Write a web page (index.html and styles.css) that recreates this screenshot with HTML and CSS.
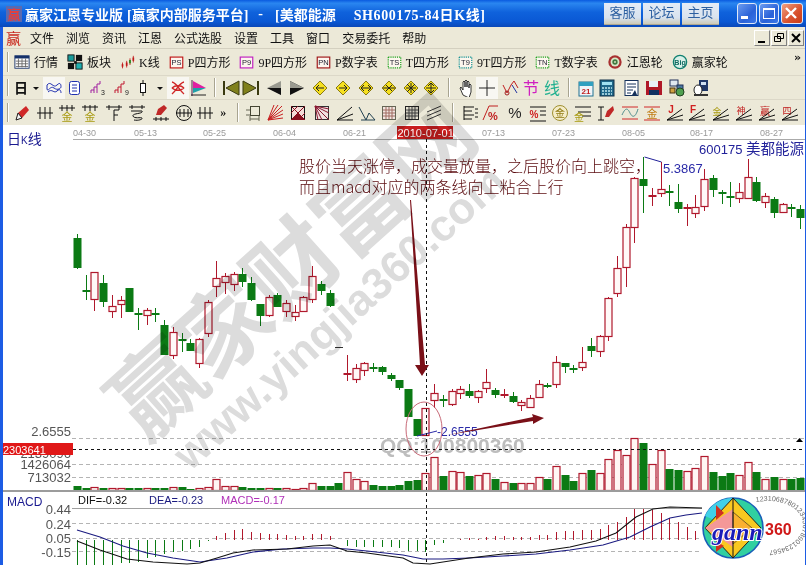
FILE: index.html
```html
<!DOCTYPE html>
<html lang="zh-CN">
<head>
    <meta charset="UTF-8">
    <title>赢家江恩专业版</title>
    <link rel="stylesheet" href="styles.css">
</head>
<body>

<div class="app">
    <div class="titlebar">
        <svg class="title-logo" width="16" height="16" viewBox="0 0 16 16"><rect width="16" height="16" fill="#5a6ab0"/><text x="8" y="13" font-size="13" text-anchor="middle" fill="#e04040">赢</text></svg>
        <span class="t1">赢家江恩专业版</span>
        <span class="t2">[赢家内部服务平台]</span>
        <span class="t3">-</span>
        <span class="t4">[美都能源</span>
        <span class="t5">SH600175-84日K线]</span>
        <div class="links">
            <a class="link">客服</a>
            <a class="link">论坛</a>
            <a class="link">主页</a>
        </div>
        <div class="winbtns">
            <div class="winbtn"><svg width="20" height="20" viewBox="0 0 20 20"><rect x="4" y="13" width="7" height="3" fill="#fff"/></svg></div>
            <div class="winbtn"><svg width="20" height="20" viewBox="0 0 20 20"><rect x="4.5" y="5.5" width="11" height="10" fill="none" stroke="#fff"/><rect x="4" y="5" width="12" height="2" fill="#fff"/></svg></div>
            <div class="winbtn close"><svg width="20" height="20" viewBox="0 0 20 20"><path d="M5 5l10 10M15 5L5 15" stroke="#fff" stroke-width="2.4"/></svg></div>
        </div>
    </div>

    <div class="menubar">
        <span class="menu-logo">赢</span>
        <span>文件</span><span>浏览</span><span>资讯</span><span>江恩</span><span>公式选股</span><span>设置</span><span>工具</span><span>窗口</span><span>交易委托</span><span>帮助</span>
        <div class="mdi">
            <div class="mdibtn"><svg width="12" height="12" viewBox="0 0 12 12"><rect x="2" y="9" width="7" height="2" fill="#000"/></svg></div>
            <div class="mdibtn"><svg width="12" height="12" viewBox="0 0 12 12"><path d="M4.5 1.5h6v5h-6zM1.5 4.5h6v5h-6z" fill="#ece9d8" stroke="#000"/></svg></div>
            <div class="mdibtn"><svg width="12" height="12" viewBox="0 0 12 12"><path d="M2 2l8 8M10 2l-8 8" stroke="#000" stroke-width="2"/></svg></div>
        </div>
    </div>

    <div class="toolbar row-text" id="tb1"></div>
    <div class="toolbar row-two" id="tb2"></div>
    <div class="toolbar row-three" id="tb3"></div>

    <div class="chart" id="chart"></div>

    <svg class="watermark" width="806" height="565" viewBox="0 0 806 565">
        <text class="wm-big" transform="translate(145 444) rotate(-42)">赢家财富网</text>
        <text class="wm-url" transform="translate(190 472) rotate(-42)">www.yingjia360.com</text>
    </svg>
</div>

<script src="script.js"></script>
</body>
</html>
```

FILE: styles.css
```css
body {
    margin: 0;
    overflow: hidden;
    background: #ece9d8;
    font-family: "Liberation Serif", "Noto Sans CJK SC", serif;
}

.app {
    position: relative;
    width: 806px;
    height: 565px;
    overflow: hidden;
}

/* blue window edges */
.app::before,
.app::after {
    content: '';
    position: absolute;
    left: 0;
    top: 27px;
    bottom: 0;
    width: 3px;
    background: #1c5ce4;
    z-index: 3;
}

.app::after {
    left: auto;
    right: 0;
    width: 1px;
}

.titlebar {
    height: 27px;
    display: flex;
    align-items: center;
    color: #fff;
    font-size: 14px;
    font-weight: bold;
    white-space: nowrap;
    background: linear-gradient(180deg, #0a5be0 0%, #2a86f0 12%, #0f62dc 45%, #0a58d4 80%, #0a48b8 100%);
}

.title-logo { margin-left: 6px; flex: none; }
.t1 { margin-left: 3px; }
.t2 { margin-left: 4px; }
.t3 { margin-left: 10px; }
.t4 { margin-left: 12px; }
.t5 { margin-left: 18px; letter-spacing: .6px; }

.links {
    display: flex;
    gap: 2px;
    position: absolute;
    left: 604px;
    top: 3px;
}

.link {
    width: 37px;
    height: 22px;
    line-height: 20px;
    text-align: center;
    font-size: 13px;
    font-weight: normal;
    color: #2c5fa0;
    background: linear-gradient(180deg, #e4ecf6, #d8e2ee 70%, #cfcbb8);
    border-bottom: 1px solid #b0a890;
    box-sizing: border-box;
}

.winbtns {
    display: flex;
    gap: 2px;
    position: absolute;
    left: 737px;
    top: 3px;
}

.winbtn {
    width: 20px;
    height: 21px;
    border: 1px solid #dfe8f8;
    border-radius: 3px;
    box-sizing: border-box;
    background: linear-gradient(135deg, #6c9cf0, #2a62d8 60%, #3c78e8);
}

.winbtn svg { display: block; margin: -1px; }

.winbtn.close {
    width: 22px;
    background: linear-gradient(135deg, #f0a080, #d8502c 60%, #c83c18);
}

.menubar {
    height: 22px;
    display: flex;
    align-items: center;
    gap: 12px;
    padding-left: 6px;
    font-size: 12px;
    color: #111;
    box-sizing: border-box;
    border-bottom: 1px solid #d4d0c0;
    position: relative;
}

.menu-logo {
    color: #c8281e;
    font-size: 15px;
    margin-right: -3px;
    width: 15px;
}

.mdi {
    position: absolute;
    left: 754px;
    top: 3px;
    display: flex;
    gap: 1px;
}

.mdibtn {
    width: 16px;
    height: 16px;
    box-sizing: border-box;
    padding: 1px;
    border: 1px solid;
    border-color: #fff #808080 #808080 #fff;
}

.mdibtn svg { display: block; }

.toolbar {
    display: flex;
    align-items: center;
    box-sizing: border-box;
    border-bottom: 1px solid #dcd8c8;
    font-size: 12px;
    color: #111;
    white-space: nowrap;
    position: relative;
}

.row-text { height: 27px; padding-left: 14px; }
.row-two { height: 24px; }
.row-three { height: 25px; border-bottom: 0; }

/* grab handle at the start of each toolbar */
.toolbar::before {
    content: '';
    position: absolute;
    left: 7px;
    top: 3px;
    bottom: 3px;
    width: 1px;
    background: #a8a490;
    border-right: 1px solid #fff;
}

.tool {
    display: flex;
    align-items: center;
    gap: 4px;
    margin-right: 9px;
}

.tool svg, .btn svg { display: block; flex: none; }

.more {
    position: absolute;
    left: 794px;
    top: 2px;
    font-size: 11px;
    font-weight: bold;
    font-family: "DejaVu Sans", sans-serif;
}

.btn {
    height: 100%;
    flex: none;
    display: flex;
    align-items: center;
    justify-content: center;
}

.btn.sel svg {
    background: #f8f7f2;
    outline: 2px solid #f8f7f2;
}

.sep {
    width: 1px;
    height: 19px;
    background: #a8a490;
    border-right: 1px solid #fff;
}

.chart { height: 440px; background: #fff; }
.chart svg { display: block; }

.chart text { font-family: "Liberation Sans", "Noto Sans CJK SC", sans-serif; }

.date { font-size: 9px; fill: #9a9a9a; }
.date-now { font-size: 11px; fill: #fff; }
.axis { font-size: 13px; fill: #555; text-anchor: end; }
.note { font-size: 16px; font-weight: 300; fill: #5a0a0e; }
.chart text.note { font-family: "Noto Sans CJK SC", sans-serif; }
.stock { font-size: 13px; fill: #22229a; }
.price { fill: #2a2aa8; }
.qq { font-size: 21px; font-weight: bold; fill: #bdbdbd; }
.macd-val { font-size: 11px; }

.watermark {
    position: absolute;
    left: 0;
    top: 0;
    pointer-events: none;
    mix-blend-mode: multiply;
    z-index: 2;
}

.wm-big {
    font-family: "Noto Sans CJK SC", sans-serif;
    font-size: 91px;
    font-weight: 700;
    fill: #dcdcdc;
}

.wm-url {
    font-family: "Liberation Sans", sans-serif;
    font-size: 44px;
    font-weight: bold;
    fill: #dcdcdc;
}
```

FILE: script.js
```js
// small text helper for icons
function t(s, x, y, size, fill, extra) {
    return `<text x="${x}" y="${y}" font-size="${size}" fill="${fill}" text-anchor="middle" font-family="Liberation Sans, Noto Sans CJK SC, sans-serif" ${extra || ''}>${s}</text>`;
}
function boxIcon(label, color, dash) {
    return `<rect x="1.5" y="2.5" width="15" height="13" fill="#fdf6ee" stroke="${color}" stroke-width="1.4" ${dash ? 'stroke-dasharray="1.4 1.2"' : ''}/>` + t(label, 9, 12.5, 9, '#223');
}
function diamond(inner) {
    return `<path d="M9 2l7 7-7 7-7-7z" fill="#f6e020" stroke="#8a7a10"/><path d="${inner}" stroke="#222" fill="none"/>`;
}
const stairs = c => `<path d="M2 14v-3h3v-3h3v-3h3v-3" fill="none" stroke="${c}"/><path d="M5 14v-3M8 14v-6" stroke="${c}"/>`;
const angleLines = '<path d="M1 16L16 5M1 16L17 11M1 16h16" stroke="#111"/>';

const icons = {
    table: '<rect x="1" y="2" width="16" height="14" fill="#fff" stroke="#14306a"/><rect x="1" y="2" width="16" height="3" fill="#14306a"/><path d="M2 8h14M2 11h14M2 14h14M5 5v10M9 5v10M13 5v10" stroke="#666"/>',
    blocks: '<rect x="1" y="1" width="7" height="7" fill="#189a9a" stroke="#111"/><rect x="10" y="1" width="7" height="7" fill="#111"/><rect x="1" y="10" width="7" height="7" fill="#111"/><rect x="10" y="10" width="7" height="7" fill="#20b0b0" stroke="#111"/><rect x="8" y="8" width="3" height="3" fill="#111"/>',
    kline: '<path d="M3 9v7M8 7v8M12 4v8M16 1v8" stroke="#c01818"/><rect x="2" y="11" width="2" height="3" fill="#c01818"/><rect x="7" y="9" width="2" height="4" fill="#c01818"/><rect x="11" y="6" width="2" height="4" fill="#188a18"/><rect x="15" y="3" width="2" height="4" fill="#c01818"/>',
    ps: boxIcon('PS', '#c01818'),
    p9: boxIcon('P9', '#c020c0'),
    pn: boxIcon('PN', '#a01818'),
    ts: boxIcon('TS', '#18a018', true),
    t9: boxIcon('T9', '#109090', true),
    tn: boxIcon('TN', '#18a018', true),
    wheel: '<circle cx="9" cy="9" r="7.5" fill="#a83030"/><circle cx="9" cy="9" r="5" fill="#d8e8c8"/><circle cx="9" cy="9" r="3" fill="#407a40"/><circle cx="9" cy="9" r="1" fill="#e8e8c8"/>',
    big: '<circle cx="9" cy="9" r="7.5" fill="#d8f0e8" stroke="#108070" stroke-width="1.4"/>' + t('Big', 9, 12, 8, '#106a60', 'font-weight="bold"'),
    day: t('日', 9, 14, 14, '#111', 'font-weight="bold"'),
    down: '<path d="M6 8h6l-3 3z" fill="#111"/>',
    wave: '<path d="M2 6c4-5 6 4 10 0s4 1 4 2-3 4-7 1-6 5-7 1z M3 13c4-4 6 2 9-1s4 0 4 2" fill="none" stroke="#2030b0"/>',
    doc: '<rect x="3.5" y="2.5" width="10" height="13" rx="2" fill="#fff" stroke="#2030b0"/><path d="M6 6h5M6 9h5M6 12h5" stroke="#2030b0"/>',
    n3: stairs('#a020a0') + t('3', 14, 16, 7, '#222'),
    n9: stairs('#c01830') + t('9', 14, 16, 7, '#222'),
    candle: '<path d="M9 1v16" stroke="#111"/><rect x="6.5" y="4.5" width="5" height="9" fill="#fff" stroke="#111"/>',
    xred: '<path d="M3 3c5 1 7 8 12 12M15 3c-5 1-7 8-12 12M3 9c3-3 9-3 12 0M3 9c3 3 9 3 12 0" fill="none" stroke="#d02828" stroke-width="1.4"/>',
    flag: '<path d="M3 1v16" stroke="#502050"/><path d="M4 2l13 7H4z" fill="#e020a0"/><path d="M4 9h13l-13 5z" fill="#20a0a8"/><path d="M2 16h15" stroke="#222"/>',
    first: '<rect x="1" y="2" width="2" height="14" fill="#3a3a10"/><path d="M17 2v14L4 9z" fill="#80801c" stroke="#3a3a10"/>',
    last: '<rect x="15" y="2" width="2" height="14" fill="#3a3a10"/><path d="M1 2v14l13-7z" fill="#80801c" stroke="#3a3a10"/>',
    prev: '<path d="M16 2v14L2 9z" fill="#9a9a90"/><path d="M16 16L2 9h14z" fill="#111"/>',
    next: '<path d="M2 2v14l14-7z" fill="#111"/><path d="M2 2l14 7H2z" fill="#9a9a90"/>',
    d1: diamond('M5 9h8M8 6L5 9l3 3'),
    d2: diamond('M5 9h8M10 6l3 3-3 3'),
    d3: diamond('M4 9h10M7 6L4 9l3 3M11 6l3 3-3 3'),
    d4: diamond('M3 9h12M6 6l3 3-3 3M12 6L9 9l3 3'),
    d5: diamond('M5 5l8 8M13 5l-8 8M9 4v10M4 9h10'),
    d6: diamond('M9 4v10M4 9h10M6 7l3-3 3 3M6 11l3 3 3-3'),
    hand: '<path d="M6 16L3 9l1-1 2 3V3l1-1 1 1v5-6l1-1 1 1v6-5l1-1 1 1v6-3l1-1 1 1v7l-2 6z" fill="#fff" stroke="#222" stroke-width=".9"/>',
    plus: '<path d="M9 1v16M1 9h16" stroke="#222"/>',
    zig: '<path d="M2 6l4 8 4-8 3-4 4 7" fill="none" stroke="#c02020"/><circle cx="6" cy="14" r="2" fill="none" stroke="#a02020"/><path d="M11 6l5 8" stroke="#2030a0"/>',
    jie: t('节', 9, 15, 16, '#d020c0'),
    xian: t('线', 9, 15, 16, '#20b090'),
    cal: '<rect x="2" y="3" width="14" height="14" fill="#f0f4f8" stroke="#207090"/><rect x="2" y="3" width="14" height="4" fill="#30a0c0"/>' + t('21', 9, 15, 8, '#c02020', 'font-weight="bold"'),
    calc: '<rect x="2" y="1" width="14" height="16" fill="#20688a" stroke="#103048"/><rect x="4" y="3" width="10" height="3" fill="#a0e0f0"/><path d="M4 9h10M4 12h10M4 15h10" stroke="#c0e8f0" stroke-dasharray="2 1" stroke-width="1.5"/>',
    notes: '<rect x="3" y="1.5" width="13" height="15" fill="#fff" stroke="#14305a"/><path d="M5 5h9M5 8h9M5 11h6M5 14h4" stroke="#14305a"/><path d="M13 11l2 5h-5z" fill="#14305a"/>',
    save: '<rect x="1" y="2" width="16" height="14" fill="#b01828"/><rect x="4" y="2" width="9" height="6" fill="#e8f0f8"/><rect x="4" y="11" width="10" height="5" fill="#103060"/>',
    net: '<rect x="2" y="1" width="8" height="6" fill="#e0e8f0" stroke="#203058"/><rect x="9" y="6" width="6" height="5" fill="#4a78a0" stroke="#203058"/><circle cx="12" cy="13" r="4" fill="#50a050" stroke="#204020"/><rect x="2" y="9" width="5" height="5" fill="#d0a040" stroke="#403010"/>',
    disk: '<rect x="7" y="1" width="9" height="11" fill="#203868"/><rect x="9" y="3" width="5" height="3" fill="#d0e0f0"/><ellipse cx="6" cy="11" rx="4" ry="5" fill="#fff" stroke="#222"/><path d="M2 15h14v2H2z" fill="#333"/>',
    pen: '<path d="M3 16l2-7 8-7 3 4-7 8z" fill="#d02828"/><path d="M3 16l2-7 4 5z" fill="#f4f4f4" stroke="#222"/>',
    hash: '<path d="M1 9h16M4 3v12M9 3v12M14 3v12" stroke="#111"/>',
    jin1: '<path d="M1 4h16M4 1v6M9 1v6M14 1v6" stroke="#111"/>' + t('金', 9, 17, 11, '#a89a10'),
    jin2: '<path d="M1 3h16M4 1v6M9 1v6M14 1v6" stroke="#111"/>' + t('金', 9, 17, 11, '#a89a10'),
    ffork: '<path d="M1 3h16M4 1v5M14 1v5M9 6v11M9 6h5M9 11h4" stroke="#111" fill="none"/>',
    spring: '<path d="M1 3h16M4 1v4M14 1v4M3 7h11c2 3-10 2-9 5s8 1 9 2-3 3-8 2" stroke="#111" fill="none"/>',
    penb: '<path d="M4 11l2-6 6-4 3 3-6 7z" fill="#c02828"/><path d="M1 15h16M4 13v4M9 13v4M14 13v4" stroke="#111"/>',
    circ: '<circle cx="9" cy="9" r="7.5" fill="none" stroke="#111"/><path d="M1 9h16M5 5v8M9 5v8M13 5v8" stroke="#111"/>',
    box: '<rect x="5.5" y="2.5" width="9" height="9" fill="none" stroke="#443"/><path d="M1 6h4M1 11h4M5 12v5M14 12v5M5 15h9" stroke="#665"/>',
    fan: '<path d="M2 16L16 2M2 16L17 6M2 16L17 10M2 16L17 14M2 16L8 1M2 16L12 1" stroke="#c82020"/>',
    gbox: '<rect x="2.5" y="2.5" width="13" height="13" fill="#f4dcd8" stroke="#111"/><path d="M2 16L16 2M2 2l14 14M9 2L2 9M16 9l-7 7" stroke="#8a1020"/><path d="M2 16l7-7 7 7z" fill="#8a1020"/>',
    gfan: '<rect x="2.5" y="2.5" width="13" height="13" fill="#f0e0e0" stroke="#333"/><path d="M2 2l14 14M2 2l14 7M2 2l7 14M2 2l14 3M2 2l3 14" stroke="#8a1830"/>',
    angle: '<path d="M1 16L16 3M1 16L17 10M1 16h16" stroke="#111"/>',
    vee: '<path d="M1 3l7 13 3-7 6 7M3 16h14" stroke="#204050" fill="none"/>',
    grid: '<rect x="2.5" y="2.5" width="13" height="13" fill="#f0e6e0" stroke="#665"/><path d="M6 3v12M9 3v12M12 3v12M3 6h12M3 9h12M3 12h12" stroke="#a06a60"/>',
    grid2: '<rect x="2.5" y="2.5" width="13" height="13" fill="#e8e4d4" stroke="#222"/><path d="M6 3v12M9 3v12M12 3v12M3 6h12M3 9h12M3 12h12" stroke="#444"/>',
    para: '<path d="M2 8L16 2M2 12L16 6M2 16L16 10" stroke="#333"/>',
    bars: '<path d="M3 2v14M3 3h10M3 7h8M3 11h10M3 15h8" stroke="#111" fill="none"/><path d="M14 5h3M14 9h3M14 13h3" stroke="#111"/>',
    pctline: '<path d="M1 16L7 2h9" stroke="#c02020" fill="none"/>' + t('%', 11, 16, 11, '#c02020', 'font-weight="bold"'),
    pct: t('%', 9, 14, 15, '#222'),
    pctl: '<path d="M1 3h16M1 17h16M11 7h6M11 11h6" stroke="#111"/>' + t('%', 5, 14, 10, '#d02020', 'font-weight="bold"'),
    jinc: '<circle cx="9" cy="9" r="7.5" fill="#f4ecc8" stroke="#a09030"/>' + t('金', 9, 13, 10, '#907a10'),
    jinl: '<path d="M1 3h16M4 8h13M8 12h9" stroke="#111"/>' + t('金', 5, 17, 10, '#a89a10'),
    ipen: '<path d="M1 3h6M4 3v13M1 16h6" stroke="#111"/><path d="M8 13l2-6 6-5 1 4-5 7z" fill="#c02828"/>',
    wavel: '<path d="M1 3h16M1 15h16" stroke="#d02828"/><path d="M1 11c4-9 6-6 8-2s5 6 8-4" fill="none" stroke="#4a8a8a"/>',
    jinr: '<path d="M1 3h16M1 16h16" stroke="#d02828"/>' + t('金', 9, 14, 11, '#c07a10'),
    tagj: t('J', 5, 9, 10, '#d02020', 'font-weight="bold"') + angleLines,
    tagf: t('F', 5, 9, 10, '#d02020', 'font-weight="bold"') + angleLines,
    tagjin: t('金', 5, 11, 9, '#a89a10') + angleLines,
    tagshen: t('神', 6, 10, 9, '#c02020') + angleLines,
    tagying: t('赢', 7, 11, 10, '#c02020') + angleLines,
    tagsi: t('四', 6, 10, 9, '#c02020') + angleLines
};

function svgIcon(key, size) {
    return `<svg width="${size}" height="${size}" viewBox="0 0 18 18">${icons[key]}</svg>`;
}

// first toolbar: icon + label
const textTools = [
    ['table', '行情', 16], ['blocks', '板块', 16], ['kline', 'K线', 15], ['ps', 'P四方形', 15], ['p9', '9P四方形', 15],
    ['pn', 'P数字表', 15], ['ts', 'T四方形', 15], ['t9', '9T四方形', 15], ['tn', 'T数字表', 15], ['wheel', '江恩轮', 16], ['big', '赢家轮', 16]
];
document.getElementById('tb1').innerHTML = textTools
    .map(([k, label, s]) => `<div class="tool">${svgIcon(k, s)}<span>${label}</span></div>`).join('') + '<span class="more">»</span>';

// other toolbars: [icon, centre x]; widths come from the distance between neighbours
const row2 = [['day', 21], ['down', 35], ['wave', 53, 1], ['doc', 75], ['n3', 97], ['n9', 122], ['candle', 145], ['down', 158], ['xred', 177, 1], ['flag', 199],
    ['|', 217], ['first', 228], ['last', 250], ['prev', 274], ['next', 297], ['d1', 319], ['d2', 343], ['d3', 366], ['d4', 390], ['d5', 410], ['d6', 433],
    ['|', 449], ['hand', 463], ['plus', 487, 1], ['zig', 510], ['jie', 531], ['xian', 553], ['|', 570], ['cal', 583], ['calc', 607], ['notes', 632], ['save', 653], ['net', 678], ['disk', 700]];
const row3 = [['pen', 22], ['hash', 45], ['jin1', 66], ['jin2', 90], ['ffork', 114], ['spring', 137], ['penb', 161], ['circ', 184], ['hash', 206], ['»', 225],
    ['|', 237], ['box', 252], ['fan', 275], ['gbox', 298], ['gfan', 322], ['angle', 345], ['vee', 367], ['grid', 389], ['grid2', 412], ['para', 435],
    ['|', 455], ['bars', 466], ['pctline', 491], ['pct', 515], ['pctl', 538], ['jinc', 560], ['jinl', 583], ['ipen', 606], ['wavel', 630], ['jinr', 652],
    ['tagj', 675], ['tagf', 696], ['tagjin', 721], ['tagshen', 745], ['tagying', 766], ['tagsi', 790]];

function buildRow(id, items) {
    const row = document.getElementById(id);
    let left = 2 * items[0][1] - (items[0][1] + items[1][1]) / 2;
    row.style.paddingLeft = left + 'px';
    let html = '';
    items.forEach((it, i) => {
        const next = items[i + 1];
        const right = next ? (it[1] + next[1]) / 2 : it[1] + 12;
        let inner;
        if (it[0] === '|') inner = '<div class="sep"></div>';
        else if (it[0] === '»') inner = '<b>»</b>';
        else inner = svgIcon(it[0], 18);
        html += `<div class="btn${it[2] ? ' sel' : ''}" style="width:${right - left}px">${inner}</div>`;
        left = right;
    });
    row.innerHTML = html;
}
buildRow('tb2', row2);
buildRow('tb3', row3);

// candles: [type, wick top, body top, body bottom, wick bottom]
const K = [
    ['g',234,238,268,269],['g',275,290,291,300],['r',272,272,299,311],['g',275,283,302,307],['r',295,306,311,318],['r',296,300,304,318],['g',288,288,312,312],['g',308,313,314,330],['r',308,310,315,325],['g',308,313,314,322],
    ['g',320,325,355,355],['r',327,332,355,359],['g',333,339,340,352],['g',339,343,351,351],['r',338,339,363,368],['r',300,302,333,337],['r',261,278,286,297],['r',273,276,282,294],['r',272,274,284,291],['g',268,274,282,287],
    ['g',277,283,300,301],['g',304,304,316,326],['r',295,297,315,317],['g',293,295,307,307],['r',300,303,311,317],['r',305,312,316,321],['r',296,297,311,312],['r',266,276,299,303],['g',281,284,291,295],['g',290,293,306,307],
    ['k',347,347,347,347],['r',355,373,374,381],['r',364,368,379,383],['r',362,363,370,376],['g',363,367,368,372],['g',366,367,372,375],['g',373,375,379,381],['g',380,380,388,390],['g',389,389,417,417],['g',419,419,436,436],
    ['r',408,408,435,436],['r',384,393,400,408],['g',395,399,400,407],['r',389,391,404,406],['r',386,389,393,399],['g',384,391,396,398],['r',390,391,397,403],['r',369,382,388,393],['g',388,390,395,398],['r',389,394,395,398],
    ['g',392,396,402,403],['r',400,402,405,411],['r',395,398,407,408],['r',380,384,397,398],['g',383,385,386,388],['r',356,362,384,388],['g',363,363,367,373],['g',365,368,369,373],['r',347,362,367,371],['g',338,346,351,357],
    ['r',335,336,351,357],['r',297,298,336,341],['r',256,268,293,297],['r',224,227,267,287],['r',177,178,227,243],['g',157,179,186,213],['r',188,195,196,206],['r',162,189,193,197],['g',185,191,192,206],['g',184,202,209,213],
    ['r',204,207,208,226],['r',195,207,213,218],['r',169,179,206,211],['g',175,178,190,197],['g',190,192,193,204],['g',182,196,197,207],['r',183,192,198,203],['r',159,177,198,198],['g',177,182,201,202],['r',193,196,202,208],
    ['g',197,199,213,218],['r',203,204,212,213],['g',204,207,209,217],['g',205,209,218,229]
];

// volume bars: top y of each bar, bottom is always 490
const volTop = [486,488,487,488,488,488,488,488,488,488,488,487,487,489,488,487,479,486,486,487,488,488,488,488,488,489,488,483,486,486,483,472,479,481,485,486,486,485,
    481,480,473,457,476,471,472,476,475,473,479,482,483,483,483,477,479,466,475,481,473,470,473,459,450,455,438,443,464,450,469,470,471,468,456,472,476,473,475,462,472,479,477,479,479,478];

// macd bars, one y per candle: below 540 is green, above is red
const macd = [565,565,565,565,565,563,563,562,558,557,554,552,551,549,547,541,536,533,530,529,532,533,534,534,535,536,536,534,534,536,540,546,547,547,547,547,547,548,
    551,551,552,545,543,540,539,538,539,537,536,536,537,537,537,535,535,532,531,531,530,530,529,525,522,517,509,509,510,513,518,522,527,531];

const xOf = i => Math.round(77 + 8.71 * i);
const RED = '#b0182c', GREEN = '#0b7a14';
let s = '';

// scale row
s += '<path d="M73 139.5H806" stroke="#aaa"/>';
[['04-30',73],['05-13',134],['05-25',203],['06-04',273],['06-21',343],['07-13',482],['07-23',552],['08-05',622],['08-17',690],['08-27',760]]
    .forEach(([d, x]) => { s += `<text class="date" x="${x}" y="136">${d}</text>`; });
s += '<rect x="397" y="126" width="56" height="13" fill="#c81e1e"/><text class="date-now" x="397.5" y="137">2010-07-01</text>';
s += '<text x="7" y="144" font-size="14" fill="#1a1a90">日<tspan font-size="10">K</tspan>线</text>';

// grid
[438, 464, 477].forEach(y => { s += `<path d="M72 ${y}.5H806" stroke="#b4b4b4" stroke-dasharray="4 3"/>`; });
s += '<text class="axis" x="71" y="436">2.6555</text><text class="axis" x="71" y="458">2139096</text>';
s += '<text class="axis" x="71" y="469">1426064</text><text class="axis" x="71" y="482">713032</text>';
s += '<rect x="3" y="443" width="70" height="12" fill="#e01818"/><text x="3" y="453.5" font-size="11" fill="#fff">2303641</text>';
s += '<path d="M796 442l3.5-4 3.5 4z" fill="#000"/>';

// candles
K.forEach((k, i) => {
    const x = xOf(i), col = k[0] === 'r' ? RED : k[0] === 'g' ? GREEN : '#333';
    const thin = k[3] - k[2] <= 1;
    s += `<path d="M${x + .5} ${k[1]}V${k[4]}" stroke="${col}"/>`;
    if (k[0] === 'k') s += `<path d="M${x - 3} ${k[1]}.5h8" stroke="${col}"/>`;
    else if (thin) s += `<rect x="${x - 3.5}" y="${k[2]}" width="8" height="2" fill="${col}"/>`;
    else if (k[0] === 'g') s += `<rect x="${x - 3.5}" y="${k[2]}" width="8" height="${k[3] - k[2]}" fill="${col}"/>`;
    else s += `<rect x="${x - 3}" y="${k[2]}.5" width="7" height="${k[3] - k[2]}" fill="#fff9f8" stroke="${col}" stroke-width="1.2"/>`;
});

// volume
K.forEach((k, i) => {
    const x = xOf(i), top = volTop[i];
    if (k[0] === 'r') s += `<rect x="${x - 3}" y="${top}.5" width="7" height="${490 - top}" fill="#fff6f4" stroke="${RED}" stroke-width="1.2"/>`;
    else s += `<rect x="${x - 3.5}" y="${top}" width="8" height="${490 - top}" fill="${GREEN}"/>`;
});
s += '<rect x="0" y="490" width="806" height="2" fill="#9c9c9c"/>';

// macd panel
s += '<path d="M72 508.5H806" stroke="#a0a0a0"/>';
[523, 538, 551].forEach(y => { s += `<path d="M72 ${y}.5H806" stroke="#b4b4b4" stroke-dasharray="4 3"/>`; });
s += '<text x="7" y="506" font-size="12" fill="#1a1a90">MACD</text>';
s += '<text class="macd-val" x="78" y="504" fill="#111">DIF=-0.32</text><text class="macd-val" x="149" y="504" fill="#1a1a80">DEA=-0.23</text><text class="macd-val" x="221" y="504" fill="#b030b8">MACD=-0.17</text>';
[['0.44', 514], ['0.24', 529], ['0.05', 543], ['-0.15', 557]].forEach(([v, y]) => { s += `<text class="axis" x="71" y="${y}">${v}</text>`; });
macd.forEach((y, i) => {
    const x = xOf(i) + .5;
    s += `<path d="M${x} 540V${y}" stroke="${y > 540 ? GREEN : RED}"/>`;
});
s += '<polyline fill="none" stroke="#1a1a80" stroke-width="1.1" points="77,530 100,537 123,546 147,553 173,558 200,562 227,558 253,552 283,549 313,548 330,548 347,549 367,551 403,555 423,559 443,559 469,558 503,556 536,554 570,550 603,545 630,537 650,527 670,518 686,515 702,513"/>';
s += '<polyline fill="none" stroke="#111" stroke-width="1.1" points="77,541 100,550 127,559 153,562 187,564 200,563 217,558 233,553 253,550 287,549 313,546 330,545 347,551 367,553 403,558 413,563 430,564 469,558 503,554 536,552 570,547 596,541 616,533 636,517 653,509 670,507 702,508"/>';

// annotation
s += '<text class="note" x="299" y="172">股价当天涨停，成交量放量，之后股价向上跳空，</text>';
s += '<text class="note" x="299" y="193">而且macd对应的两条线向上粘合上行</text>';
s += '<text class="stock" x="699" y="154">600175 <tspan font-size="14.5">美都能源</tspan></text>';
s += '<path d="M644.5 157L661.5 162" stroke="#22229a"/>';
s += '<text class="stock price" x="663" y="173">5.3867</text>';
s += '<path d="M417 436L437 431" stroke="#2a2aa8"/><text class="price" x="437" y="436" font-size="12">-2.6555</text>';

s += '<text class="qq" x="380" y="453">QQ:100800360</text>';
s += '<path d="M73 449.5H806" stroke="#111" stroke-dasharray="3 3"/>';
s += '<path d="M426.5 139V565" stroke="#111" stroke-dasharray="3 3"/>';
s += '<ellipse cx="424" cy="429" rx="18" ry="27" fill="none" stroke="#c86a78"/>';
s += '<path d="M410 200L411 200L425 365L429 365L422 376L415 365L420 365Z" fill="#7a1018"/>';
s += '<path d="M448 435L533 417L532 414L544 418L533 424L533 421Z" fill="#7a1018"/>';

// gann360 logo
s += `<g>
<rect x="702" y="494" width="103" height="71" fill="#fff"/>
<circle cx="733" cy="528" r="30" fill="#30d0a0" stroke="#1a60b8" stroke-width="1.6"/>
<path d="M705 516A30 30 0 0 1 733 498L733 528Z" fill="#40d0e8"/>
<path d="M733 498L761 528L733 558L705 528Z" fill="#f8c820" stroke="#222"/>
<path d="M705 528L733 509V547Z" fill="#f49898"/>
<path d="M733 512L752 528L733 544Z" fill="#fab030" stroke="#222" stroke-width=".6"/>
<path d="M716 505L724 513L716 520Z" fill="#d03020"/>
<path d="M716 552L724 546L716 541Z" fill="#d03020"/>
<path d="M733 498V558" stroke="#111"/>
<text x="712" y="540" font-size="24" font-weight="bold" font-style="italic" fill="#1a1ab8" stroke="#fff" stroke-width="2" paint-order="stroke" style="font-family:'Liberation Serif',serif">gann</text>
<text x="765" y="535" font-size="16" font-weight="bold" fill="#d01818">360</text>
<path id="ring" d="M756 502C785 497 803 510 803 525C803 540 785 553 756 550" fill="none"/>
<text font-size="7" fill="#666"><textPath href="#ring">123106878012345678901234567</textPath></text>
</g>`;

document.getElementById('chart').innerHTML = `<svg width="806" height="440" viewBox="0 125 806 440">${s}</svg>`;
```
